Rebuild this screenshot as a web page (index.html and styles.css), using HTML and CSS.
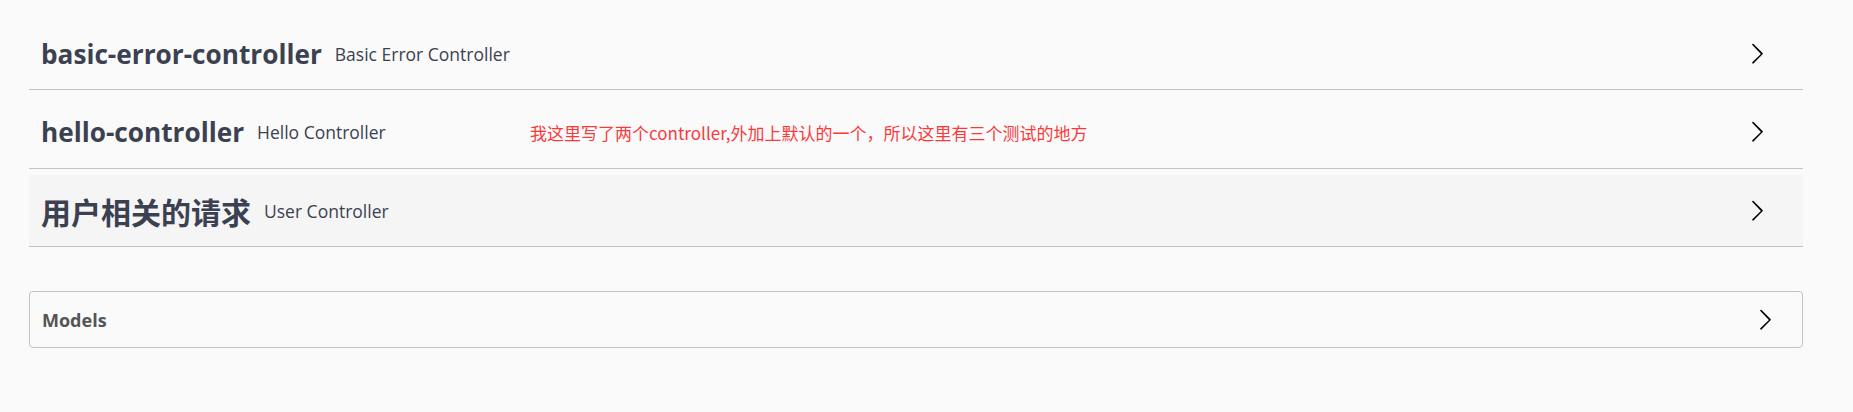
FILE: index.html
```html
<!DOCTYPE html>
<html lang="zh-CN">
<head>
<meta charset="utf-8">
<title>Swagger UI</title>
<link rel="stylesheet" href="styles.css">
</head>
<body>
<div class="wrapper">
  <div class="tags">
    <div class="tag">
      <div class="tag-title">
        <span class="tag-name">basic-error-controller</span>
        <span class="tag-desc">Basic Error Controller</span>
      </div>
      <svg class="arrow" viewBox="0 0 20 20" width="24" height="24"><path d="M13.25 10L6.109 2.58a.697.697 0 0 1 .979-.979l7.546 7.631a.697.697 0 0 1 0 .979l-7.546 7.631a.697.697 0 0 1-.979-.979L13.25 10z"/></svg>
    </div>
    <div class="tag">
      <div class="tag-title">
        <span class="tag-name">hello-controller</span>
        <span class="tag-desc">Hello Controller</span>
      </div>
      <span class="note">我这里写了两个controller,外加上默认的一个，所以这里有三个测试的地方</span>
      <svg class="arrow" viewBox="0 0 20 20" width="24" height="24"><path d="M13.25 10L6.109 2.58a.697.697 0 0 1 .979-.979l7.546 7.631a.697.697 0 0 1 0 .979l-7.546 7.631a.697.697 0 0 1-.979-.979L13.25 10z"/></svg>
    </div>
    <div class="tag tag-hover">
      <div class="tag-title">
        <span class="tag-name tag-name-cjk">用户相关的请求</span>
        <span class="tag-desc">User Controller</span>
      </div>
      <svg class="arrow" viewBox="0 0 20 20" width="24" height="24"><path d="M13.25 10L6.109 2.58a.697.697 0 0 1 .979-.979l7.546 7.631a.697.697 0 0 1 0 .979l-7.546 7.631a.697.697 0 0 1-.979-.979L13.25 10z"/></svg>
    </div>
  </div>
  <section class="models">
    <span class="models-title">Models</span>
    <svg class="arrow" viewBox="0 0 20 20" width="24" height="24"><path d="M13.25 10L6.109 2.58a.697.697 0 0 1 .979-.979l7.546 7.631a.697.697 0 0 1 0 .979l-7.546 7.631a.697.697 0 0 1-.979-.979L13.25 10z"/></svg>
  </section>
</div>
</body>
</html>
```
FILE: styles.css
```css
html, body {
  margin: 0;
  padding: 0;
  background: #fafafa;
}

body {
  font-family: "Open Sans", "Noto Sans CJK SC", sans-serif;
  color: #3b4151;
}

.wrapper {
  padding: 18px 50px 0 29px;
}

.tags {
  display: flex;
  flex-direction: column;
  gap: 6.5px;
}

.tag {
  position: relative;
  display: flex;
  align-items: center;
  justify-content: space-between;
  height: 71px;
  padding: 0 34px 0 12px;
  border-bottom: 1px solid #c1c3c7;
}

.tag-hover {
  background: #f5f5f5;
}

.tag-title {
  display: flex;
  align-items: center;
  gap: 13px;
}

.tag-name {
  font-family: "Open Sans", "Noto Sans CJK SC", sans-serif;
  font-weight: 700;
  font-size: 26.2px;
  color: #3b4151;
}

.tag-name-cjk {
  font-family: "Noto Sans CJK SC", sans-serif;
  font-size: 30px;
}

.tag-desc {
  font-family: "Open Sans", sans-serif;
  font-size: 17.5px;
  font-weight: 400;
  color: #3b4151;
}

.arrow {
  flex: none;
  fill: #000;
}

.note {
  position: absolute;
  left: 501px;
  top: 50%;
  transform: translateY(-50%);
  font-family: "Microsoft YaHei", "Noto Sans CJK SC", sans-serif;
  font-size: 17px;
  color: #fa3a3a;
  white-space: nowrap;
}

.models {
  margin-top: 44px;
  height: 55px;
  display: flex;
  align-items: center;
  justify-content: space-between;
  padding: 0 25px 0 12px;
  border: 1px solid #c1c3c7;
  border-radius: 4px;
}

.models-title {
  font-family: "Open Sans", sans-serif;
  font-weight: 700;
  font-size: 18px;
  color: #555;
}
```
